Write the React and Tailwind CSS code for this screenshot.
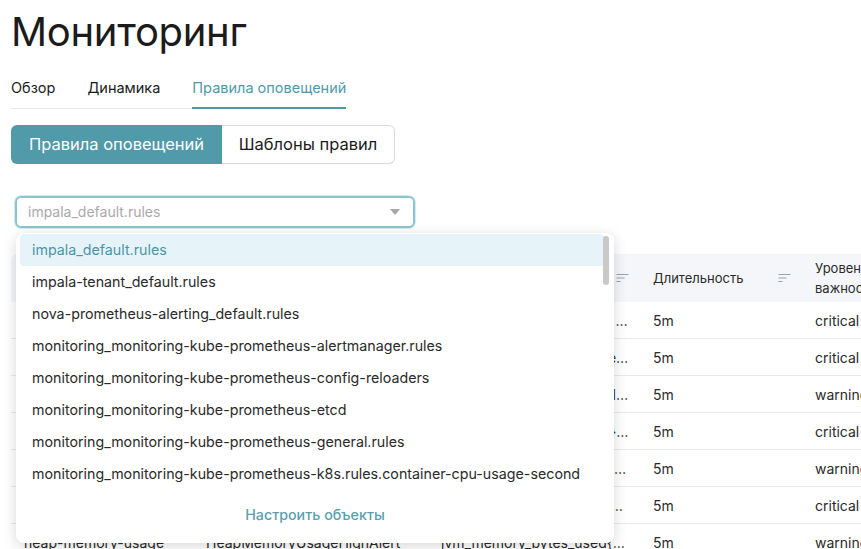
import { useState } from "react";

const options = [
  "impala_default.rules",
  "impala-tenant_default.rules",
  "nova-prometheus-alerting_default.rules",
  "monitoring_monitoring-kube-prometheus-alertmanager.rules",
  "monitoring_monitoring-kube-prometheus-config-reloaders",
  "monitoring_monitoring-kube-prometheus-etcd",
  "monitoring_monitoring-kube-prometheus-general.rules",
  "monitoring_monitoring-kube-prometheus-k8s.rules.container-cpu-usage-second",
];

const rows = [
  ["impala-catalog-down", "ImpalaCatalogDown", "up{job=\"impala-catalog\"} == 0 and on...", "5m", "critical"],
  ["impala-statestore-down", "ImpalaStatestoreDown", "up{job=\"impala-statestore\"} == 0 o...", "5m", "critical"],
  ["impala-query-queue", "ImpalaQueryQueueHigh", "impala_admission_queue_length > on...", "5m", "warning"],
  ["impala-daemon-down", "ImpalaDaemonDown", "up{job=\"impala-daemon\"} == 0 w...", "5m", "critical"],
  ["impala-query-failed", "ImpalaQueryFailedHigh", "rate(impala_queries_failed[5m]) > f...", "5m", "warning"],
  ["impala-memory-limit", "ImpalaMemoryLimitExceeded", "impala_mem_tracker_limit_exceeded a...", "5m", "critical"],
  ["heap-memory-usage", "HeapMemoryUsageHighAlert", "jvm_memory_bytes_used{area=\"heap\"}...o...", "5m", "warning"],
];

function SortIcon() {
  return (
    <svg width="13" height="10" viewBox="0 0 13 10" fill="none" className="shrink-0">
      <path d="M0.5 1.5h12M0.5 5h8M0.5 8.5h4" stroke="#9aa3b0" strokeWidth="1.2" />
    </svg>
  );
}

export default function App() {
  const [tab, setTab] = useState(2);
  const tabs = ["Обзор", "Динамика", "Правила оповещений"];

  return (
    <div className="min-h-[549px] w-[861px] overflow-hidden bg-white pl-[11px] text-[#1b1b1b]" style={{ fontFamily: "Inter, 'Noto Sans', sans-serif" }}>
      <h1 className="pt-[7px] text-[40px] leading-[50px] font-normal tracking-[-0.3px]">Мониторинг</h1>

      <div className="mt-[20px] flex w-max gap-[32px] border-b border-[#e6e8ec]">
        {tabs.map((t, i) => (
          <button
            key={t}
            onClick={() => setTab(i)}
            className={
              i === tab
                ? "-mb-px border-b-2 border-[#4f9aa9] pb-[8px] text-[14.5px] whitespace-nowrap text-[#4f9aa9]"
                : "-mb-px border-b-2 border-transparent pb-[8px] text-[14.5px] whitespace-nowrap text-[#1b1b1b]"
            }
          >
            {t}
          </button>
        ))}
      </div>

      <div className="mt-[16px] flex h-[39px] w-[384px] text-[16.5px]">
        <div className="flex w-[211px] items-center justify-center rounded-l-[6px] bg-[#509aaa] text-white">Правила оповещений</div>
        <div className="flex flex-1 items-center justify-center rounded-r-[6px] border border-l-0 border-[#d6dbe3]">Шаблоны правил</div>
      </div>

      <div className="relative mt-[32px] ml-[4px] w-[400px]">
        <div className="flex h-[32px] items-center justify-between rounded-[6px] border-2 border-[#8cc3cf] px-[11px] text-[14px] text-[#a9a9a9] shadow-[0_0_0_1px_#d7ecf1]">
          <span>impala_default.rules</span>
          <svg width="10" height="6" viewBox="0 0 10 6" className="mr-[2px]">
            <path d="M0 0h10L5 6z" fill="#a7a7a7" />
          </svg>
        </div>

        <div className="absolute top-[37px] left-[1px] z-10 flex h-[310px] w-[598px] flex-col rounded-[8px] bg-white shadow-[0_3px_14px_rgba(0,0,0,0.16)]">
          <div className="relative flex-1 px-[4px] pt-[1px]">
            <div className="w-[584px]">
              {options.map((o, i) => (
                <div
                  key={o}
                  className={
                    i === 0
                      ? "flex h-[32px] items-center rounded-[4px] bg-[#e6f4f9] px-[12px] text-[14.25px] text-[#4a95a8]"
                      : "flex h-[32px] items-center px-[12px] text-[14.25px] text-[#2a2a2a]"
                  }
                >
                  {o}
                </div>
              ))}
            </div>
            <div className="absolute top-[3px] right-[5px] h-[49px] w-[6px] rounded-full bg-[#c9c9c9]" />
          </div>
          <div className="flex h-[50px] items-center justify-center pb-[6px] text-[14.25px] font-medium text-[#5a9fb0]">Настроить объекты</div>
        </div>
      </div>

      <table className="mt-[26px] w-[880px] table-fixed border-collapse text-[14px] text-[#2a2a2a]">
        <colgroup>
          <col className="w-[183px]" />
          <col className="w-[235px]" />
          <col className="w-[212px]" />
          <col className="w-[162px]" />
          <col />
        </colgroup>
        <thead>
          <tr className="h-[48px] bg-[#f4f6f9] text-left text-[13px] leading-[20px]">
            <th className="rounded-tl-[6px] px-[13px] font-normal">Имя</th>
            <th className="px-[12px] font-normal">
              <div className="flex items-center justify-between">Название <SortIcon /></div>
            </th>
            <th className="px-[12px] font-normal">
              <div className="flex items-center justify-between">Выражение <SortIcon /></div>
            </th>
            <th className="px-[12px] font-normal">
              <div className="flex items-center justify-between">Длительность <SortIcon /></div>
            </th>
            <th className="px-[12px] font-normal">Уровень<br />важности</th>
          </tr>
        </thead>
        <tbody>
          {rows.map((r) => (
            <tr key={r[0]} className="h-[37px] border-b border-[#e8eaef]">
              <td className="truncate px-[13px]">{r[0]}</td>
              <td className="truncate px-[12px]">{r[1]}</td>
              <td className="truncate px-[12px]">{r[2]}</td>
              <td className="px-[12px]">{r[3]}</td>
              <td className="px-[12px]">{r[4]}</td>
            </tr>
          ))}
        </tbody>
      </table>
    </div>
  );
}
